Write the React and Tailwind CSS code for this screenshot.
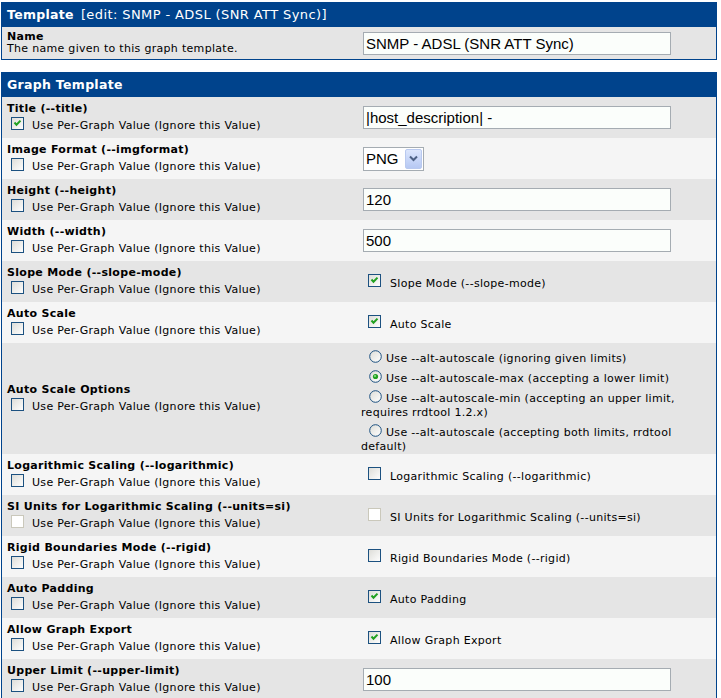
import React from "react";

function Check({ checked = false, disabled = false }) {
  return (
    <svg width="13" height="13" viewBox="0 0 13 13" className="shrink-0 block">
      <defs>
        <linearGradient id="cbg" x1="0" y1="0" x2="1" y2="1">
          <stop offset="0" stopColor="#dcdcd7" />
          <stop offset="1" stopColor="#ffffff" />
        </linearGradient>
      </defs>
      <rect
        x="0.5"
        y="0.5"
        width="12"
        height="12"
        fill={disabled ? "#ffffff" : "url(#cbg)"}
        stroke={disabled ? "#cac8bb" : "#1c5180"}
      />
      {checked && (
        <path d="M3.5 5.5 L5.5 7.8 L9.5 3.6" stroke="#21a121" strokeWidth="2" fill="none" />
      )}
    </svg>
  );
}

function Radio({ checked = false }) {
  return (
    <svg width="13" height="13" viewBox="0 0 13 13" className="shrink-0 block">
      <defs>
        <linearGradient id="rbg" x1="0" y1="0" x2="1" y2="1">
          <stop offset="0" stopColor="#dcdcd7" />
          <stop offset="1" stopColor="#ffffff" />
        </linearGradient>
      </defs>
      <circle cx="6.5" cy="6.5" r="5.8" fill="url(#rbg)" stroke="#1c5180" strokeWidth="1" />
      {checked && (
        <>
          <circle cx="6.5" cy="6.5" r="2.6" fill="#21a121" />
          <circle cx="6" cy="6" r="1" fill="#8fe08f" />
        </>
      )}
    </svg>
  );
}

function TextInput({ value }) {
  return (
    <input
      readOnly
      value={value}
      className="w-[308px] h-[23px] border border-[#a5acb2] bg-[#fbfefb] px-[2px] text-[15px] tracking-normal text-black font-['Liberation_Sans',Arial,sans-serif] outline-none"
    />
  );
}

function SelectBox({ value }) {
  return (
    <div className="flex items-center w-[61px] h-[24px] border border-[#a5acb2] bg-white">
      <span className="flex-1 pl-[2px] text-[15px] tracking-normal leading-[20px] text-black font-['Liberation_Sans',Arial,sans-serif]">
        {value}
      </span>
      <div className="w-[17px] h-[20px] mr-[1px] flex items-center justify-center rounded-[2px] border border-[#b9c9ef] bg-gradient-to-b from-[#dce6fd] to-[#b6c8f3]">
        <svg width="9" height="7" viewBox="0 0 9 7">
          <path d="M1 1.5 L4.5 5 L8 1.5" stroke="#4d6185" strokeWidth="2" fill="none" />
        </svg>
      </div>
    </div>
  );
}

function RightCheck({ checked, disabled, text }) {
  return (
    <div className="flex items-end mt-[2px]">
      <div className="ml-[5px] mr-[9px] mb-[4px]">
        <Check checked={checked} disabled={disabled} />
      </div>
      <span className="leading-[14px]">{text}</span>
    </div>
  );
}

function Radios() {
  const line = "flex items-end h-[20px]";
  const dot = "ml-[6px] mr-[4px] mb-[3px]";
  return (
    <div className="flex flex-col leading-[14px]">
      <div className={line}>
        <div className={dot}>
          <Radio />
        </div>
        <span>Use --alt-autoscale (ignoring given limits)</span>
      </div>
      <div className={line}>
        <div className={dot}>
          <Radio checked />
        </div>
        <span>Use --alt-autoscale-max (accepting a lower limit)</span>
      </div>
      <div className={line}>
        <div className={dot}>
          <Radio />
        </div>
        <span>Use --alt-autoscale-min (accepting an upper limit,</span>
      </div>
      <div className="h-[14px] -ml-[2px]">requires rrdtool 1.2.x)</div>
      <div className={line}>
        <div className={dot}>
          <Radio />
        </div>
        <span>Use --alt-autoscale (accepting both limits, rrdtool</span>
      </div>
      <div className="h-[14px] -ml-[2px]">default)</div>
    </div>
  );
}

const rows = [
  { label: "Title (--title)", checked: true, right: { type: "input", value: "|host_description| -" } },
  { label: "Image Format (--imgformat)", right: { type: "select", value: "PNG" } },
  { label: "Height (--height)", right: { type: "input", value: "120" } },
  { label: "Width (--width)", right: { type: "input", value: "500" } },
  { label: "Slope Mode (--slope-mode)", right: { type: "check", checked: true, text: "Slope Mode (--slope-mode)" } },
  { label: "Auto Scale", right: { type: "check", checked: true, text: "Auto Scale" } },
  { label: "Auto Scale Options", right: { type: "radios" } },
  { label: "Logarithmic Scaling (--logarithmic)", right: { type: "check", checked: false, text: "Logarithmic Scaling (--logarithmic)" } },
  { label: "SI Units for Logarithmic Scaling (--units=si)", disabled: true, right: { type: "check", disabled: true, text: "SI Units for Logarithmic Scaling (--units=si)" } },
  { label: "Rigid Boundaries Mode (--rigid)", right: { type: "check", checked: false, text: "Rigid Boundaries Mode (--rigid)" } },
  { label: "Auto Padding", right: { type: "check", checked: true, text: "Auto Padding" } },
  { label: "Allow Graph Export", right: { type: "check", checked: true, text: "Allow Graph Export" } },
  { label: "Upper Limit (--upper-limit)", right: { type: "input", value: "100" } },
];

function Right({ r }) {
  if (r.type === "input") return <TextInput value={r.value} />;
  if (r.type === "select") return <SelectBox value={r.value} />;
  if (r.type === "check") return <RightCheck checked={r.checked} disabled={r.disabled} text={r.text} />;
  return <Radios />;
}

export default function App() {
  return (
    <div className="bg-white min-h-[698px] pl-[1px] pt-[2px] font-['DejaVu_Sans',Verdana,sans-serif] text-[11px] tracking-[0.3px] text-black">
      {/* Template table */}
      <div className="w-[716px] border border-[#00438c] bg-[#e5e5e5]">
        <div className="h-[24px] bg-[#00438c] flex items-center pl-[5px] text-white text-[12.5px]">
          <span className="font-bold">Template</span>
          <span className="ml-[7px] text-[13px] tracking-[0.4px]">[edit: SNMP - ADSL (SNR ATT Sync)]</span>
        </div>
        <div className="grid grid-cols-[357px_1fr] h-[32px]">
          <div className="pl-[5px] pt-[3px]">
            <div className="font-bold leading-[13px]">Name</div>
            <div className="leading-[12px]">The name given to this graph template.</div>
          </div>
          <div className="pl-[4px] flex items-center">
            <TextInput value="SNMP - ADSL (SNR ATT Sync)" />
          </div>
        </div>
      </div>

      {/* Graph Template table */}
      <div className="mt-[12px] w-[716px] border border-[#00438c] border-b-0">
        <div className="h-[24px] bg-[#00438c] flex items-center pl-[5px] text-white text-[12.5px] font-bold">
          Graph Template
        </div>
        {rows.map((row, i) => (
          <div
            key={row.label}
            className={`grid grid-cols-[357px_1fr] min-h-[41px] ${i % 2 === 0 ? "bg-[#e5e5e5]" : "bg-[#f5f5f5]"}`}
          >
            <div className="pl-[5px] pt-[5px] pb-[4px] flex flex-col justify-center">
              <div className="font-bold leading-[14px] h-[14px]">{row.label}</div>
              <div className="flex items-start h-[18px]">
                <div className="ml-[4px] mr-[8px] mt-[1px]">
                  <Check checked={row.checked} disabled={row.disabled} />
                </div>
                <span className="leading-[14px] mt-[3px]">Use Per-Graph Value (Ignore this Value)</span>
              </div>
            </div>
            <div className={`pl-[4px] flex items-center ${row.right.type === "radios" ? "pt-[3px]" : ""}`}>
              <Right r={row.right} />
            </div>
          </div>
        ))}
      </div>
    </div>
  );
}
